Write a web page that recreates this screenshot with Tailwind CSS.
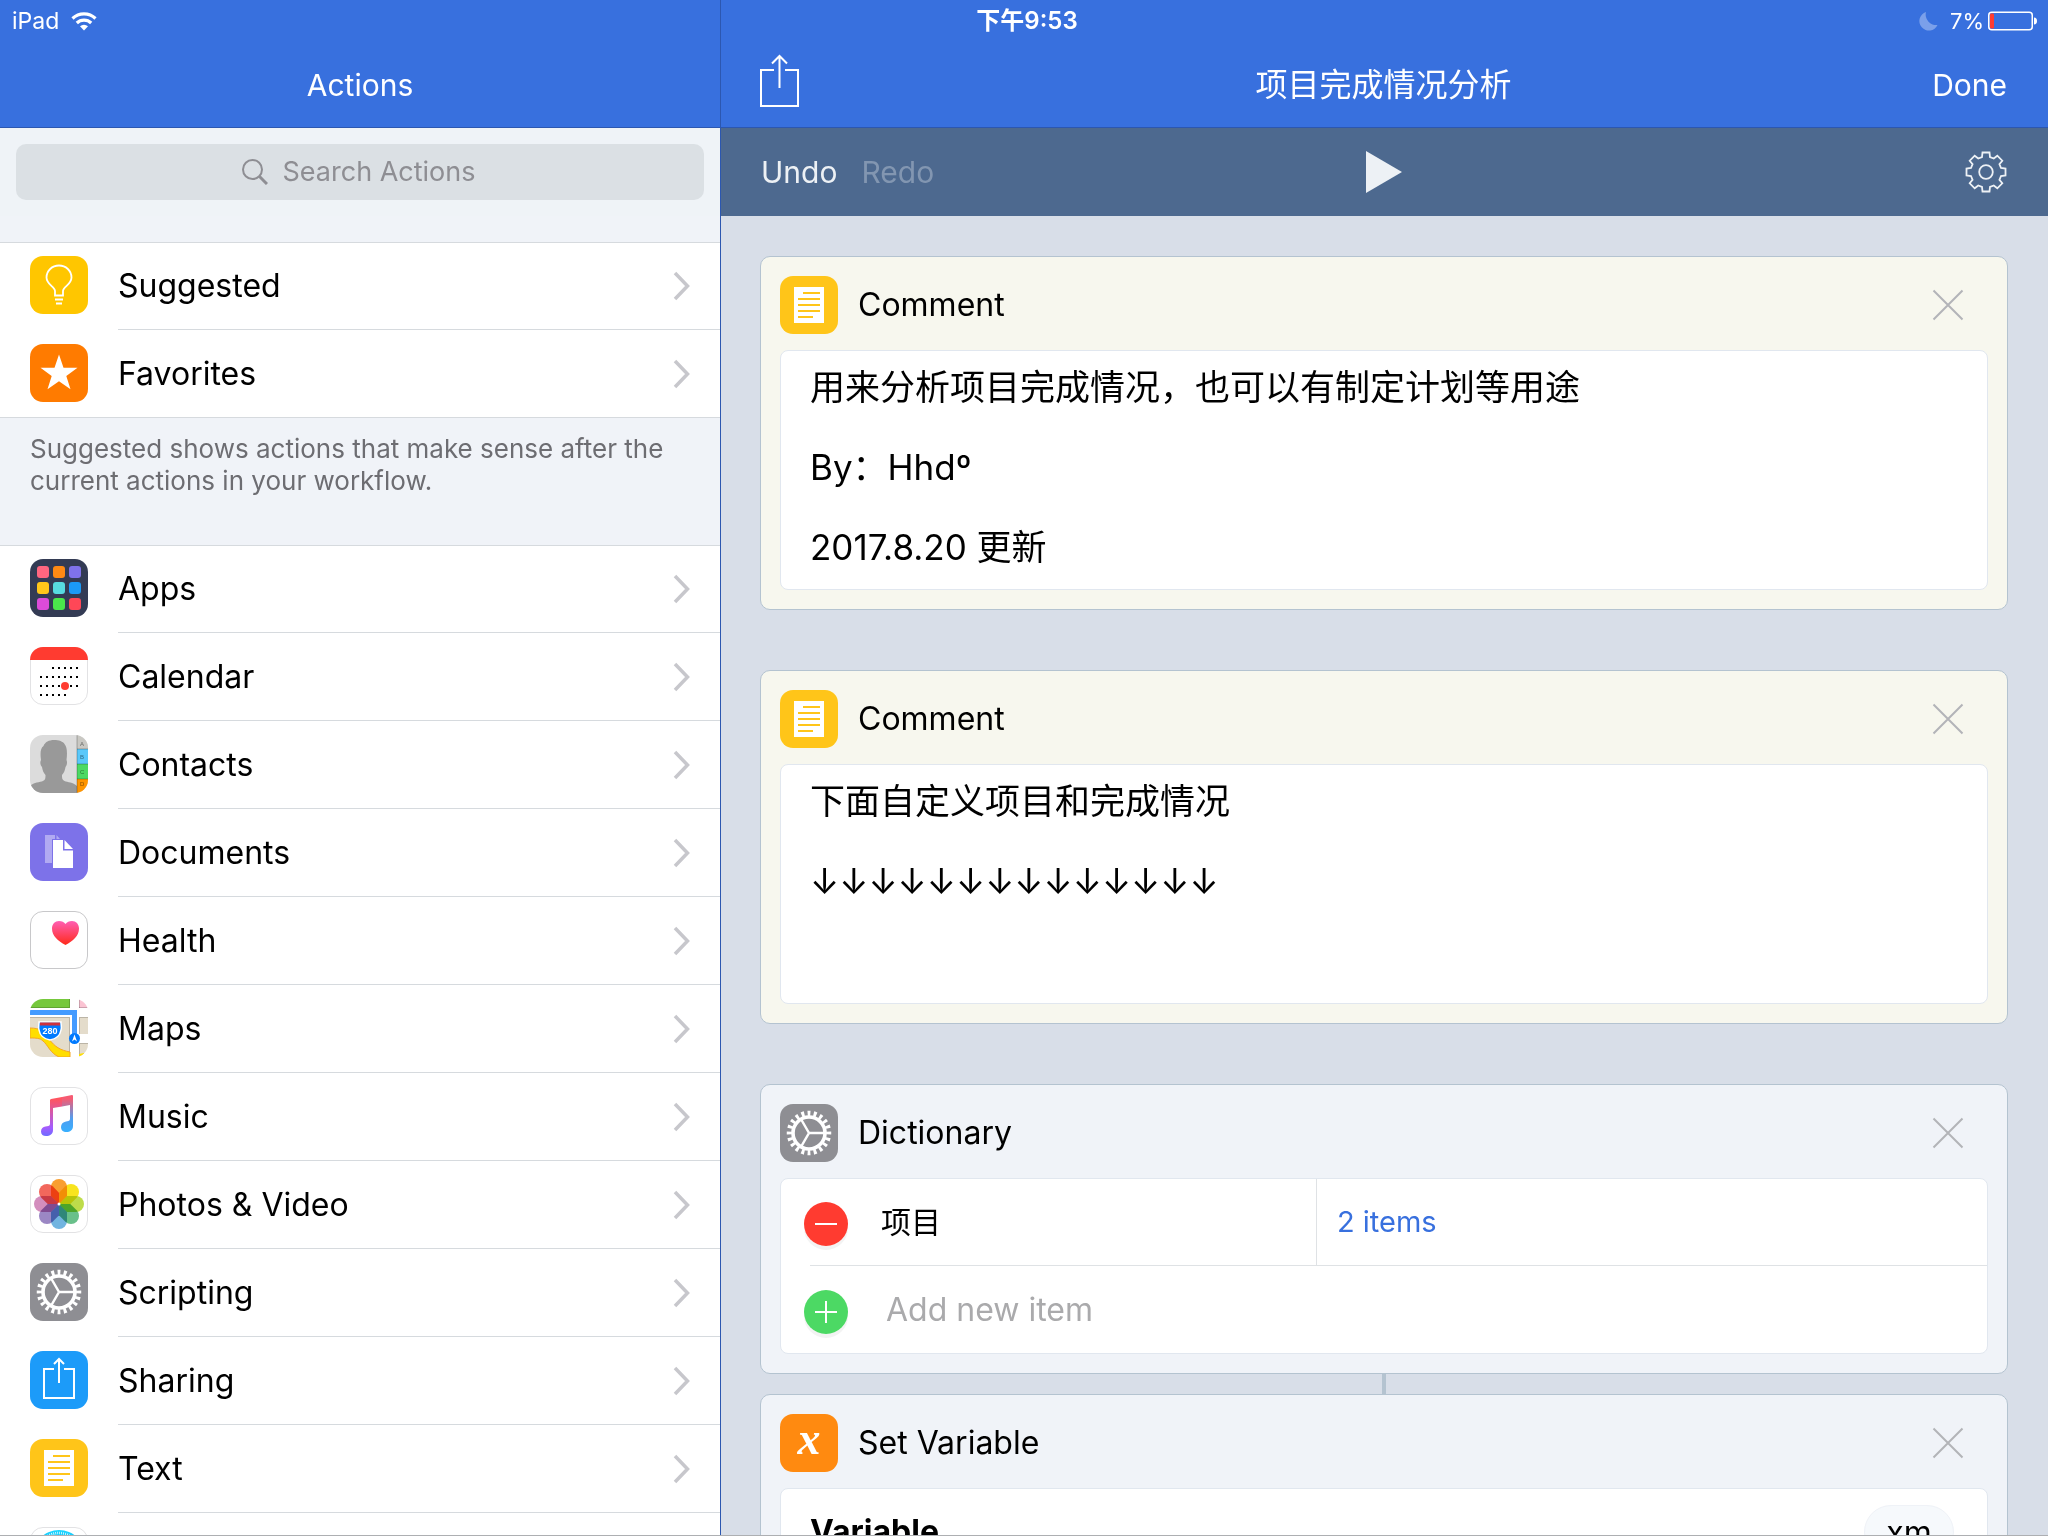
<!DOCTYPE html>
<html lang="zh-CN">
<head>
<meta charset="utf-8">
<meta name="viewport" content="width=device-width, initial-scale=1">
<title>项目完成情况分析</title>
<script src="https://cdn.jsdelivr.net/npm/@tailwindcss/browser@4"></script>
</head>
<body class="relative flex h-screen overflow-hidden border-b border-[#adafb2] bg-[#d8dee8] font-['Inter','Noto_Sans_CJK_SC',sans-serif] text-[32px] leading-10 text-black">

<svg class="hidden" aria-hidden="true">
  <symbol id="chevron" viewBox="0 0 18 30"><path d="M2 2l12.500 13L2 28" fill="none" stroke="#c7c7cc" stroke-width="3.500"/></symbol>
  <symbol id="close" viewBox="0 0 32 32"><path d="M1.500 1.500l29 29M30.500 1.500l-29 29" fill="none" stroke="#b3b4b8" stroke-width="2"/></symbol>
  <symbol id="text-icon" viewBox="0 0 58 58">
    <rect width="58" height="58" rx="13" fill="#ffc519"/>
    <path fill="#fff" d="M14 11h30v36H14z"/>
    <path d="M23 17h17M18 23h22M18 29h22M18 35h22M18 41h15" stroke="#ffc519" stroke-width="2"/>
  </symbol>
  <symbol id="script-icon" viewBox="0 0 58 58">
    <rect width="58" height="58" rx="13" fill="#8e8e93"/>
    <g fill="none" stroke="#fff">
      <circle cx="29" cy="29" r="16" stroke-width="3.600"/>
      <circle cx="29" cy="29" r="19.500" stroke-width="5.500" pathLength="60" stroke-dasharray="1.400 1.600" stroke-dashoffset=".7"/>
      <path d="M29 29h15M29 29l-7.500-13M29 29l-7.500 13" stroke-width="2.500"/>
    </g>
  </symbol>
</svg>

<div class="absolute inset-x-0 top-0 z-10 grid h-[42px] grid-cols-[1fr_auto_1fr] items-center pl-3 pr-[10px] text-[23px] leading-8 text-white">
  <div class="flex items-center gap-3">
    <span>iPad</span>
    <svg class="h-[19px] w-[26px]" viewBox="0 0 26 19" fill="none" stroke="#fff" stroke-width="3.200"><path d="M1.500 6.500a16.500 16.500 0 0 1 23 0M5.800 11a10.300 10.300 0 0 1 14.400 0"/><path d="M13 18.500l-4-4.300a6 6 0 0 1 8 0z" fill="#fff" stroke="none"/></svg>
  </div>
  <span class="pl-1 text-[24px] font-semibold">下午9:53</span>
  <div class="flex items-center justify-end gap-1">
    <svg class="mr-2 size-[19px]" viewBox="0 0 19 19"><path d="M7 0A10.500 10.500 0 0 0 18.500 13A9.500 9.500 0 1 1 7 0z" fill="#7ba0ea"/></svg>
    <span class="text-[22px]">7%</span>
    <svg class="h-5 w-[50px]" viewBox="0 0 50 20"><rect x=".75" y="1.250" width="43.500" height="17.500" rx="3" fill="none" stroke="#fff" stroke-width="1.500"/><rect x="2" y="2.500" width="4" height="15" rx="1" fill="#ff3b30"/><path d="M46 6.500c2 0 3 1.500 3 3.500s-1 3.500-3 3.500z" fill="#fff"/></svg>
  </div>
</div>

<aside class="flex w-[720px] shrink-0 flex-col overflow-hidden bg-[#f0f3f8]">
  <header class="flex h-32 shrink-0 items-center justify-center border-b border-[#2c57b0] bg-[#3870de] pt-[42px] text-white">
    <h1 class="text-[30px]">Actions</h1>
  </header>
  <div class="shrink-0 bg-[#eff3f7] p-4">
    <label class="flex h-14 items-center justify-center gap-[15px] rounded-[10px] bg-[#dbe0e4]">
      <svg class="size-[26px]" viewBox="0 0 26 26" fill="none" stroke="#8e8e93"><circle cx="10.500" cy="10.500" r="9.500" stroke-width="2"/><path d="M17.500 17.500l7.500 7.500" stroke-width="3"/></svg>
      <input type="text" role="searchbox" aria-label="Search Actions" placeholder="Search Actions" class="w-[196px] bg-transparent text-[27px] outline-none placeholder:text-[#8e8e93] placeholder:opacity-100">
    </label>
  </div>

  <nav class="min-h-0 flex-1 overflow-hidden pt-[26px]">
    <ul class="border-y border-[#d6dade] bg-white">
      <li><a href="#suggested" class="flex h-[87px] items-start gap-[30px] pl-[30px]">
        <svg class="mt-[13px] size-[58px] shrink-0" viewBox="0 0 58 58"><rect width="58" height="58" rx="13" fill="#ffc600"/><path d="M25 39.500V35c0-4-8.500-6.500-8.500-13.500a12.500 12 0 0 1 25 0C41.500 28.500 33 31 33 35v4.500z" fill="none" stroke="#fff" stroke-width="1.800"/><path d="M25 43.500h8M26 47.500h6" stroke="#fff" stroke-width="2"/></svg>
        <span class="flex h-full flex-1 items-center justify-between border-b border-[#d6dade] pr-[29px]">Suggested<svg class="h-[30px] w-[18px]"><use href="#chevron"/></svg></span></a></li>
      <li><a href="#favorites" class="flex h-[87px] items-start gap-[30px] pl-[30px]">
        <svg class="mt-[14px] size-[58px] shrink-0" viewBox="0 0 58 58"><rect width="58" height="58" rx="13" fill="#ff7b00"/><path d="M29 10.500l4.500 13.200h14L36.300 32l4.200 13.300L29 37.200l-11.500 8.100L21.700 32 10.500 23.700h14z" fill="#fff"/></svg>
        <span class="flex h-full flex-1 items-center justify-between pr-[29px]">Favorites<svg class="h-[30px] w-[18px]"><use href="#chevron"/></svg></span></a></li>
    </ul>
    <p class="px-[30px] pb-12 pt-[15px] text-[26px] leading-8 text-[#6d6d72]">Suggested shows actions that make sense after the current actions in your workflow.</p>
    <ul class="border-t border-[#d6dade] bg-white">
      <li><a href="#apps" class="flex h-[87px] items-start gap-[30px] pl-[30px]">
        <svg class="mt-[13px] size-[58px] shrink-0" viewBox="0 0 58 58"><rect width="58" height="58" rx="13" fill="#333b54"/><rect x="7" y="7" width="12" height="12" rx="3" fill="#ff6680"/><rect x="23" y="7" width="12" height="12" rx="3" fill="#ff8a14"/><rect x="39" y="7" width="12" height="12" rx="3" fill="#7f72ea"/><rect x="7" y="23" width="12" height="12" rx="3" fill="#ffc61a"/><rect x="23" y="23" width="12" height="12" rx="3" fill="#57dbe0"/><rect x="39" y="23" width="12" height="12" rx="3" fill="#1b9af7"/><rect x="7" y="39" width="12" height="12" rx="3" fill="#dc4bd9"/><rect x="23" y="39" width="12" height="12" rx="3" fill="#4be84b"/><rect x="39" y="39" width="12" height="12" rx="3" fill="#ff4757"/></svg>
        <span class="flex h-full flex-1 items-center justify-between border-b border-[#d6dade] pr-[29px]">Apps<svg class="h-[30px] w-[18px]"><use href="#chevron"/></svg></span></a></li>
      <li><a href="#calendar" class="flex h-[88px] items-start gap-[30px] pl-[30px]">
        <svg class="mt-[14px] size-[58px] shrink-0" viewBox="0 0 58 58"><rect x=".5" y=".5" width="57" height="57" rx="12.500" fill="#fff" stroke="#e2e2e4"/><path d="M0 13A13 13 0 0 1 13 0h32a13 13 0 0 1 13 13z" fill="#ff3b30"/><path d="M22 21h26M10 30h38M10 39h38M10 48h26" stroke="#000" stroke-width="2" stroke-dasharray="2 4"/><circle cx="35" cy="39" r="4" fill="#ff3b30"/></svg>
        <span class="flex h-full flex-1 items-center justify-between border-b border-[#d6dade] pr-[29px]">Calendar<svg class="h-[30px] w-[18px]"><use href="#chevron"/></svg></span></a></li>
      <li><a href="#contacts" class="flex h-[88px] items-start gap-[30px] pl-[30px]">
        <svg class="mt-[14px] size-[58px] shrink-0" viewBox="0 0 58 58"><clipPath id="c1"><rect width="58" height="58" rx="13"/></clipPath><g clip-path="url(#c1)"><path fill="#dcdcdc" d="M0 0h58v58H0z"/><path d="M0 58v-7c4-4 10-3.500 13-5 2.500-1.200 2.500-3 2.500-6-2-2-3-5-3.500-8-2-2-2-5-1-7-1-7-.5-12 2.500-14C15 7 19 5 24 5s9 1.500 10.500 4c2.500 3 3 8 2 16 1 2 .5 5-1 7-.5 3-1.500 6-3.500 8 0 3 0 5 2.500 6 3 1.500 8.500 1 12.500 5v7z" fill="#999"/><path fill="#c9c8c3" d="M47 0h11v14H47z"/><path fill="#5ac8fa" d="M47 14h11v15H47z"/><path fill="#4cd964" d="M47 29h11v15H47z"/><path fill="#ff9500" d="M47 44h11v14H47z"/><path d="M47 0v58M47 14h11M47 29h11M47 44h11" stroke="#000" stroke-opacity=".25"/><g font-family="Liberation Sans" font-size="6" fill="#000" fill-opacity=".5"><text x="50" y="11">A</text><text x="50" y="24">B</text><text x="50" y="39">C</text><text x="50" y="51">D</text></g></g></svg>
        <span class="flex h-full flex-1 items-center justify-between border-b border-[#d6dade] pr-[29px]">Contacts<svg class="h-[30px] w-[18px]"><use href="#chevron"/></svg></span></a></li>
      <li><a href="#documents" class="flex h-[88px] items-start gap-[30px] pl-[30px]">
        <svg class="mt-[14px] size-[58px] shrink-0" viewBox="0 0 58 58"><rect width="58" height="58" rx="13" fill="#7d72e9"/><path d="M15 12h10v4h-3v24h-7zM26.500 12l3.500 4h-3.500z" fill="#b1aaf2"/><path d="M23 17h10v10.500h10V45H23z" fill="#fff"/><path d="M34.500 17l8.500 9h-8.500z" fill="#fff"/></svg>
        <span class="flex h-full flex-1 items-center justify-between border-b border-[#d6dade] pr-[29px]">Documents<svg class="h-[30px] w-[18px]"><use href="#chevron"/></svg></span></a></li>
      <li><a href="#health" class="flex h-[88px] items-start gap-[30px] pl-[30px]">
        <svg class="mt-[14px] size-[58px] shrink-0" viewBox="0 0 58 58"><linearGradient id="g1" x2="0" y2="1"><stop stop-color="#ff5fb4"/><stop offset="1" stop-color="#ff2a1a"/></linearGradient><rect x=".5" y=".5" width="57" height="57" rx="12.500" fill="#fff" stroke="#c8c8ca"/><path d="M35.500 34C28 30 22 25 22 17.500 22 13 25 10 29 10c3 0 5 1 6.500 3C37 11 39 10 42 10c4 0 7 3 7 7.500C49 25 43 30 35.500 34z" fill="url(#g1)"/></svg>
        <span class="flex h-full flex-1 items-center justify-between border-b border-[#d6dade] pr-[29px]">Health<svg class="h-[30px] w-[18px]"><use href="#chevron"/></svg></span></a></li>
      <li><a href="#maps" class="flex h-[88px] items-start gap-[30px] pl-[30px]">
        <svg class="mt-[14px] size-[58px] shrink-0" viewBox="0 0 58 58"><clipPath id="c2"><rect width="58" height="58" rx="13"/></clipPath><g clip-path="url(#c2)"><path fill="#fff" d="M0 0h58v58H0z"/><path fill="#76c83c" d="M0 0h40v9H0z"/><path fill="#fbc4d3" d="M49 0h9v9h-9z"/><path fill="#e4dccb" d="M0 18h40v40H0zM49 18h9v17h-9zM49 44h9v14h-9z"/><path d="M0 18.500h39.500V58M49.500 35V18.500H58M49.500 58V44.500H58M49 8.500h9M49.500 0v9M0 8.500h39.500V0" fill="none" stroke="#000" stroke-opacity=".18"/><path d="M0 29c10 0 14 3 19 11 6 8 11 11 21 13v5H29C20 54 18 46 13 42c-3-3-7-3-13-3z" fill="#ffde00" stroke="#f5a623"/><path d="M49 55l5-1v4h-5z" fill="#ffde00"/><path fill="#449bff" d="M0 11h47v27h-5V16H0z"/><path d="M9 23h22c0 3 1 5 0 8-1 6-5 9-11 10-6-1-10-4-11-10-1-3 0-5 0-8z" fill="#007aff" stroke="#fff" stroke-width="1.500"/><path d="M10 23.500h20v3H10z" fill="#d0313c"/><text x="20" y="35" text-anchor="middle" font-family="Liberation Sans" font-weight="700" font-size="9" fill="#fff">280</text><circle cx="44.500" cy="39.500" r="5.500" fill="#007aff"/><path d="M44.500 35.500l2.500 7-2.500-2-2.500 2z" fill="#fff"/></g></svg>
        <span class="flex h-full flex-1 items-center justify-between border-b border-[#d6dade] pr-[29px]">Maps<svg class="h-[30px] w-[18px]"><use href="#chevron"/></svg></span></a></li>
      <li><a href="#music" class="flex h-[88px] items-start gap-[30px] pl-[30px]">
        <svg class="mt-[14px] size-[58px] shrink-0" viewBox="0 0 58 58"><linearGradient id="g2" gradientUnits="userSpaceOnUse" x1="26" y1="8" x2="26" y2="49"><stop offset=".1" stop-color="#ff5560"/><stop offset=".8" stop-color="#a35cff"/><stop offset="1" stop-color="#6d6bff"/></linearGradient><linearGradient id="g3" gradientUnits="userSpaceOnUse" x1="36" y1="8" x2="38" y2="45"><stop offset=".1" stop-color="#f65b72"/><stop offset=".65" stop-color="#4f9ef0"/><stop offset="1" stop-color="#38b0ff"/></linearGradient><rect x=".5" y=".5" width="57" height="57" rx="12.500" fill="#fff" stroke="#e2e2e4"/><path d="M32 10l10-2q1 0 1 1v30c0 4-3 6-6.500 6S31 43 31 40s2-5 5-5.500l2.500-.5q1.500-.5 1.500-2V18l-8 1.500z" fill="url(#g3)"/><path d="M32 10l-11 2q-1 .2-1 1.300V37q0 1.500-1.500 2l-3 .5C13 40 11 41.500 11 44.500s2 4.500 5 4.500c4 0 7-2 7-6V21l9-1.500z" fill="url(#g2)"/></svg>
        <span class="flex h-full flex-1 items-center justify-between border-b border-[#d6dade] pr-[29px]">Music<svg class="h-[30px] w-[18px]"><use href="#chevron"/></svg></span></a></li>
      <li><a href="#photos" class="flex h-[88px] items-start gap-[30px] pl-[30px]">
        <svg class="mt-[14px] size-[58px] shrink-0" viewBox="0 0 58 58"><rect x=".5" y=".5" width="57" height="57" rx="12.500" fill="#fff" stroke="#e2e2e4"/><g transform="translate(29 29)" class="[&_path]:mix-blend-multiply"><path d="M0 0L-8-8V-17a8 8 0 0 1 16 0V-8z" fill="#f99f30"/><path d="M0 0L-8-8V-17a8 8 0 0 1 16 0V-8z" transform="rotate(45)" fill="#f8e41e"/><path d="M0 0L-8-8V-17a8 8 0 0 1 16 0V-8z" transform="rotate(90)" fill="#bedc4a"/><path d="M0 0L-8-8V-17a8 8 0 0 1 16 0V-8z" transform="rotate(135)" fill="#69c08a"/><path d="M0 0L-8-8V-17a8 8 0 0 1 16 0V-8z" transform="rotate(180)" fill="#71b4e0"/><path d="M0 0L-8-8V-17a8 8 0 0 1 16 0V-8z" transform="rotate(225)" fill="#9b87c4"/><path d="M0 0L-8-8V-17a8 8 0 0 1 16 0V-8z" transform="rotate(270)" fill="#d38dbd"/><path d="M0 0L-8-8V-17a8 8 0 0 1 16 0V-8z" transform="rotate(315)" fill="#f2675c"/><circle r="1.500" fill="#fff"/></g></svg>
        <span class="flex h-full flex-1 items-center justify-between border-b border-[#d6dade] pr-[29px]">Photos &amp; Video<svg class="h-[30px] w-[18px]"><use href="#chevron"/></svg></span></a></li>
      <li><a href="#scripting" class="flex h-[88px] items-start gap-[30px] pl-[30px]">
        <svg class="mt-[14px] size-[58px] shrink-0"><use href="#script-icon"/></svg>
        <span class="flex h-full flex-1 items-center justify-between border-b border-[#d6dade] pr-[29px]">Scripting<svg class="h-[30px] w-[18px]"><use href="#chevron"/></svg></span></a></li>
      <li><a href="#sharing" class="flex h-[88px] items-start gap-[30px] pl-[30px]">
        <svg class="mt-[14px] size-[58px] shrink-0" viewBox="0 0 58 58"><rect width="58" height="58" rx="13" fill="#1c9bf9"/><path d="M24 18H14v29h30V18H34M29 32V8M24 13l5-5 5 5" fill="none" stroke="#fff" stroke-width="2"/></svg>
        <span class="flex h-full flex-1 items-center justify-between border-b border-[#d6dade] pr-[29px]">Sharing<svg class="h-[30px] w-[18px]"><use href="#chevron"/></svg></span></a></li>
      <li><a href="#text" class="flex h-[88px] items-start gap-[30px] pl-[30px]">
        <svg class="mt-[14px] size-[58px] shrink-0"><use href="#text-icon"/></svg>
        <span class="flex h-full flex-1 items-center justify-between border-b border-[#d6dade] pr-[29px]">Text<svg class="h-[30px] w-[18px]"><use href="#chevron"/></svg></span></a></li>
      <li><a href="#web" aria-label="Web" class="flex h-[88px] items-start gap-[30px] pl-[30px]">
        <svg class="mt-[14px] size-[58px] shrink-0" viewBox="0 0 58 58"><linearGradient id="g4" x2="0" y2="1"><stop stop-color="#19d7ff"/><stop offset="1" stop-color="#1e6ff1"/></linearGradient><rect x=".5" y=".5" width="57" height="57" rx="12.500" fill="#fff" stroke="#e2e2e4"/><circle cx="29" cy="29" r="26" fill="url(#g4)"/><circle cx="29" cy="29" r="23" fill="none" stroke="#fff" stroke-width="2.500" stroke-dasharray=".7 1.300"/></svg></a></li>
    </ul>
  </nav>
</aside>

<main class="flex min-w-0 flex-1 flex-col border-l border-[#2c57b0]">
  <header class="grid h-32 shrink-0 grid-cols-[1fr_auto_1fr] items-center border-b border-[#2c57b0] bg-[#3870de] pl-[39px] pr-[41px] pt-[42px] text-white">
    <button aria-label="Share" class="justify-self-start"><svg class="mb-2 h-[53px] w-[39px]" viewBox="0 0 39 53" fill="none" stroke="#fff" stroke-width="2"><path d="M14 16H1v36h37V16H25M19.500 34V2M12 9.500l7.500-7.500 7.500 7.500"/></svg></button>
    <h2>项目完成情况分析</h2>
    <button class="justify-self-end text-[30px]">Done</button>
  </header>
  <div class="grid h-22 shrink-0 grid-cols-[1fr_auto_1fr] items-center bg-[#4d698f] pl-10 pr-[41px] text-[30px] text-[#edf1f5]">
    <div class="flex gap-6"><button>Undo</button><button disabled class="text-[#8296b1]">Redo</button></div>
    <button aria-label="Run"><svg class="h-[42px] w-9" viewBox="0 0 36 42"><path d="M0 0l36 21L0 42z" fill="#edf1f5"/></svg></button>
    <button aria-label="Settings" class="justify-self-end"><svg class="size-[42px]" viewBox="-21 -21 42 42" fill="none" stroke="#edf1f5" stroke-width="1.800"><circle r="6.800"/><path d="M-4-15L-3.500-19.500H3.500L4-15L7.780-13.430L11.300-16.300L16.300-11.300L13.430-7.780L15-4L19.500-3.500V3.500L15 4L13.430 7.780L16.300 11.300L11.300 16.300L7.780 13.430L4 15L3.500 19.500H-3.500L-4 15L-7.780 13.430L-11.300 16.300L-16.300 11.300L-13.430 7.780L-15 4L-19.500 3.500V-3.500L-15-4L-13.430-7.780L-16.300-11.300L-11.300-16.300L-7.780-13.430Z"/></svg></button>
  </div>

  <div class="min-h-0 flex-1 overflow-hidden pl-[39px] pr-10 pt-10">
    <section class="mb-[60px] rounded-[10px] border border-[#b4c3d0] bg-[#f7f7ee] p-[19px]">
      <div class="mb-4 flex items-center gap-5 pr-6">
        <svg class="size-[58px]"><use href="#text-icon"/></svg>
        <h3 class="flex-1">Comment</h3>
        <button aria-label="Remove Comment"><svg class="size-8"><use href="#close"/></svg></button>
      </div>
      <textarea rows="5" aria-label="Comment text" class="block w-full resize-none overflow-hidden rounded-lg border border-[#e1e7ef] bg-white px-[29px] pb-[22px] pt-4 text-[35px] leading-10 outline-none">用来分析项目完成情况，也可以有制定计划等用途

By：Hhdº

2017.8.20 更新</textarea>
    </section>

    <section class="mb-[60px] rounded-[10px] border border-[#b4c3d0] bg-[#f7f7ee] p-[19px]">
      <div class="mb-4 flex items-center gap-5 pr-6">
        <svg class="size-[58px]"><use href="#text-icon"/></svg>
        <h3 class="flex-1">Comment</h3>
        <button aria-label="Remove Comment"><svg class="size-8"><use href="#close"/></svg></button>
      </div>
      <textarea rows="5" aria-label="Comment text" class="block w-full resize-none overflow-hidden rounded-lg border border-[#e1e7ef] bg-white px-[29px] pb-[22px] pt-4 text-[35px] leading-10 outline-none">下面自定义项目和完成情况

↓↓↓↓↓↓↓↓↓↓↓↓↓↓</textarea>
    </section>

    <section class="rounded-[10px] border border-[#b4c3d0] bg-[#f0f3f8] p-[19px]">
      <div class="mb-4 flex items-center gap-5 pr-6">
        <svg class="size-[58px]"><use href="#script-icon"/></svg>
        <h3 class="flex-1">Dictionary</h3>
        <button aria-label="Remove Dictionary"><svg class="size-8"><use href="#close"/></svg></button>
      </div>
      <div class="rounded-lg border border-[#e1e7ef] bg-white">
        <div class="flex h-[86px]">
          <div class="flex w-4/9 items-center gap-[33px] border-r border-[#dfe2e5] pl-[23px]">
            <button aria-label="Delete item" class="mt-1 shrink-0 rounded-full shadow-[0_4px_0_#f3f3f3]"><svg class="size-11" viewBox="0 0 44 44"><circle cx="22" cy="22" r="22" fill="#ff3b30"/><path d="M11 22h22" stroke="#fff" stroke-width="2"/></svg></button>
            <input type="text" aria-label="Key" value="项目" class="min-w-0 flex-1 text-[30px] outline-none">
          </div>
          <button class="flex-1 pl-5 text-left text-[29px] text-[#3870de]">2 items</button>
        </div>
        <div class="ml-[29px] border-t border-[#dfe2e5]"></div>
        <div class="flex h-[87px] items-center gap-[38px] pl-[23px]">
          <button aria-label="Add item" class="mt-1 shrink-0 rounded-full shadow-[0_4px_0_#f3f3f3]"><svg class="size-11" viewBox="0 0 44 44"><circle cx="22" cy="22" r="22" fill="#4cd964"/><path d="M11 22h22M22 11v22" stroke="#fff" stroke-width="2"/></svg></button>
          <input type="text" aria-label="New item" placeholder="Add new item" class="min-w-0 flex-1 outline-none placeholder:text-[#aaaaac] placeholder:opacity-100">
        </div>
      </div>
    </section>
    <div class="mx-auto h-5 w-1 bg-[#b4c3d0]"></div>
    <section class="rounded-[10px] border border-[#b4c3d0] bg-[#f0f3f8] p-[19px]">
      <div class="mb-4 flex items-center gap-5 pr-6">
        <svg class="size-[58px]" viewBox="0 0 58 58"><rect width="58" height="58" rx="13" fill="#ff8a10"/><text x="29" y="40" text-anchor="middle" font-family="Liberation Serif" font-style="italic" font-weight="700" font-size="46" fill="#fff">x</text></svg>
        <h3 class="flex-1">Set Variable</h3>
        <button aria-label="Remove Set Variable"><svg class="size-8"><use href="#close"/></svg></button>
      </div>
      <div class="rounded-lg border border-[#e1e7ef] bg-white">
        <label class="flex h-[86px] items-center justify-between pl-[29px] pr-[33px] font-bold">Variable
          <input type="text" value="xm" class="h-[54px] w-[90px] rounded-full border border-[#eff2f7] bg-[#f6f9fc] text-center font-normal outline-none">
        </label>
      </div>
    </section>
  </div>
</main>
</body>
</html>
